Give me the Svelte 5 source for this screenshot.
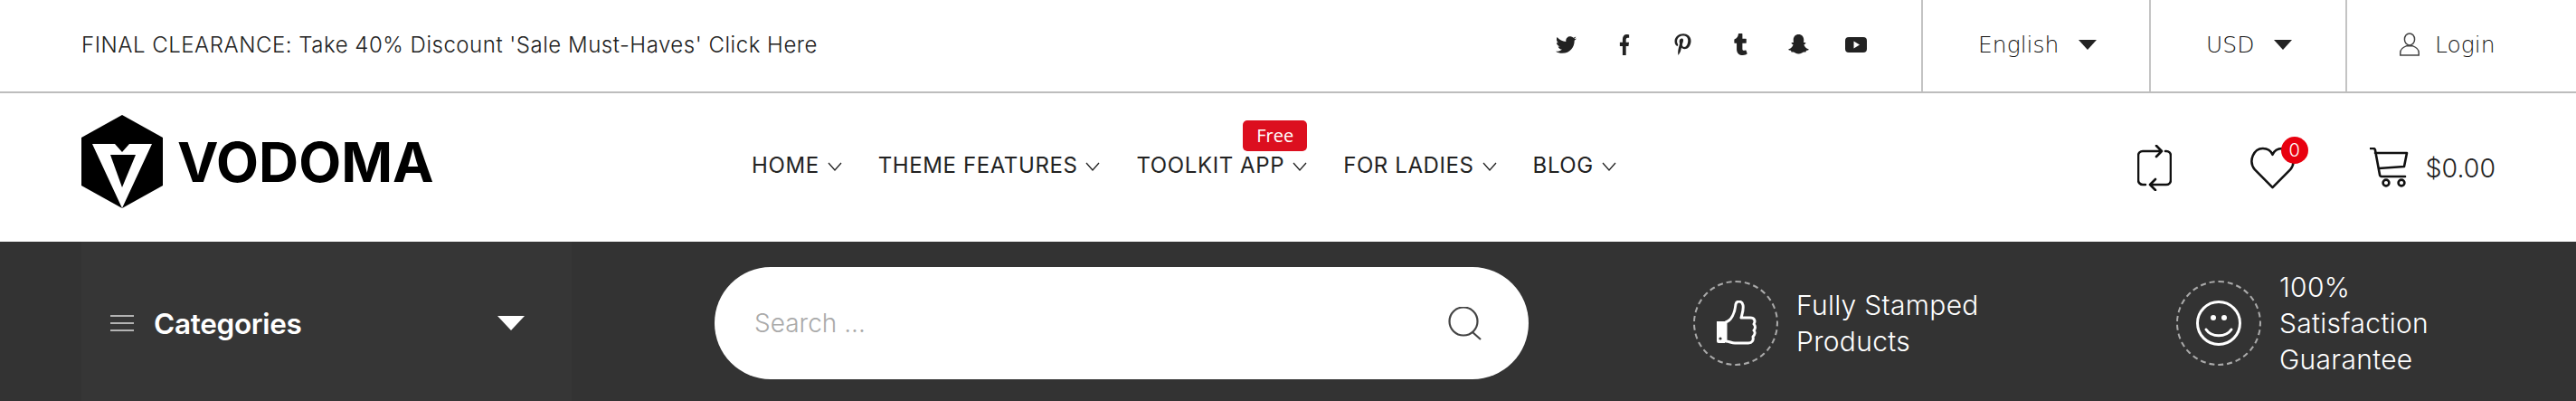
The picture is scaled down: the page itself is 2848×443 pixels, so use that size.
<script>
  const nav = [
    { label: "HOME" },
    { label: "THEME FEATURES" },
    { label: "TOOLKIT APP", badge: "Free" },
    { label: "FOR LADIES" },
    { label: "BLOG" }
  ];
</script>

<div class="page">
  <div class="topbar">
    <div class="notice">FINAL CLEARANCE: Take 40% Discount 'Sale Must-Haves' Click Here</div>
    <div class="socials">
      <svg class="tw" viewBox="0 0 512 512"><path d="M459.37 151.716c.325 4.548.325 9.097.325 13.645 0 138.72-105.583 298.558-298.558 298.558-59.452 0-114.68-17.219-161.137-47.106 8.447.974 16.568 1.299 25.34 1.299 49.055 0 94.213-16.568 130.274-44.832-46.132-.975-84.792-31.188-98.112-72.772 6.498.974 12.995 1.624 19.818 1.624 9.421 0 18.843-1.3 27.614-3.573-48.081-9.747-84.143-51.98-84.143-102.985v-1.299c13.969 7.797 30.214 12.67 47.431 13.319-28.264-18.843-46.781-51.005-46.781-87.391 0-19.492 5.197-37.36 14.294-52.954 51.655 63.675 129.3 105.258 216.365 109.807-1.624-7.797-2.599-15.918-2.599-24.04 0-57.828 46.782-104.934 104.934-104.934 30.213 0 57.502 12.67 76.67 33.137 23.715-4.548 46.456-13.32 66.599-25.34-7.798 24.366-24.366 44.833-46.132 57.827 21.117-2.273 41.584-8.122 60.426-16.243-14.292 20.791-32.161 39.308-52.628 54.253z"/></svg>
      <svg class="fb" viewBox="0 0 320 512" preserveAspectRatio="none"><path d="M279.14 288l14.22-92.66h-88.91v-60.13c0-25.35 12.42-50.06 52.24-50.06h40.42V6.26S260.43 0 225.36 0c-73.22 0-121.08 44.38-121.08 124.72v70.62H22.89V288h81.39v224h100.17V288z"/></svg>
      <svg class="pin" viewBox="0 0 384 512"><path d="M204 6.5C101.4 6.5 0 74.9 0 185.6 0 256 39.6 296 63.6 296c9.9 0 15.6-27.6 15.6-35.4 0-9.3-23.7-29.1-23.7-67.8 0-80.4 61.2-137.4 140.4-137.4 68.1 0 118.5 38.7 118.5 109.8 0 53.1-21.3 152.7-90.3 152.7-24.9 0-46.2-18-46.2-43.8 0-37.8 26.4-74.4 26.4-113.4 0-66.2-93.9-54.2-93.9 25.8 0 16.8 2.1 35.4 9.6 50.7-13.8 59.4-42 147.9-42 209.1 0 18.9 2.7 37.5 4.5 56.4 3.4 3.8 1.7 3.4 6.9 1.5 50.4-69 48.6-82.5 71.4-172.8 12.3 23.4 44.1 36 69.3 36 106.2 0 153.9-103.5 153.9-196.8C384 71.3 298.2 6.5 204 6.5z"/></svg>
      <svg class="tum" viewBox="0 0 320 512" preserveAspectRatio="none"><path d="M309.8 480.3c-13.6 14.5-50 31.7-97.4 31.7-120.8 0-147-88.8-147-140.6v-144H17.9c-5.5 0-10-4.5-10-10v-68c0-7.2 4.5-13.6 11.3-16 62-21.8 81.5-76 84.3-117.1.8-11 6.5-16.3 16.1-16.3h70.9c5.5 0 10 4.5 10 10v115.2h83c5.5 0 10 4.4 10 9.9v81.7c0 5.5-4.5 10-10 10h-83.4V360c0 34.2 23.7 53.6 68 35.8 4.8-1.9 9-3.2 12.7-2.2 3.5.9 5.8 3.4 7.4 7.9l22 64.3c1.8 5 3.3 10.6-.4 14.5z"/></svg>
      <svg class="snap" viewBox="2 2 20 20"><path d="M12 2c-3.2 0-5 2.4-5 5.2 0 1 .1 2 .1 2.6-.6.2-1.5-.2-1.9.3-.4.6.4 1.1 1.6 1.6-.3 1.7-2 3.7-4.2 4.4-.5.2-.4.8.1 1 .7.3 1.6.4 2 .6.2.4.1 1 .5 1.2.6.2 1.5-.1 2.5.3 1 .4 1.9 1.6 4.3 1.6s3.3-1.2 4.3-1.6c1-.4 1.9-.1 2.5-.3.4-.2.3-.8.5-1.2.4-.2 1.3-.3 2-.6.5-.2.6-.8.1-1-2.2-.7-3.9-2.7-4.2-4.4 1.2-.5 2-1 1.6-1.6-.4-.5-1.3-.1-1.9-.3 0-.6.1-1.6.1-2.6C17 4.4 15.2 2 12 2z"/></svg>
      <svg class="yt" viewBox="0 0 24 17"><path fill-rule="evenodd" d="M4 0h16a4 4 0 0 1 4 4v9a4 4 0 0 1-4 4H4a4 4 0 0 1-4-4V4a4 4 0 0 1 4-4zm5.5 4.6v7.8l6.5-3.9z"/></svg>
    </div>
    <div class="cell lang"><span>English</span><i class="caret"></i></div>
    <div class="cell cur"><span>USD</span><i class="caret"></i></div>
    <div class="cell login">
      <svg viewBox="0 0 24 28" fill="none" stroke="#444" stroke-width="1.6"><ellipse cx="12" cy="8" rx="6" ry="7"/><path d="M1 27v-3c0-4 4-7 7-8h8c3 1 7 4 7 8v3z"/></svg>
      <span>Login</span>
    </div>
  </div>

  <div class="midbar">
    <div class="logo">
      <svg viewBox="0 0 90 103"><path d="M45 0 90 25V78L45 103 0 78V25z" fill="#000"/><path d="M12 32H37L45 41 53 32H78L45 103z" fill="#fff"/><path d="M32 44H60L45 80z" fill="#000"/></svg>
      <span>VODOMA</span>
    </div>
    <nav>
      {#each nav as item}
        <div class="navitem">
          {#if item.badge}<span class="free">{item.badge}</span>{/if}
          <span>{item.label}</span>
          <svg viewBox="0 0 16 10" fill="none" stroke="#222" stroke-width="1.3"><path d="M1 1l7 8 7-8"/></svg>
        </div>
      {/each}
    </nav>
    <div class="tools">
      <svg class="compare" viewBox="0 0 38 51" fill="none" stroke="#111" stroke-width="2.6" stroke-linecap="round" stroke-linejoin="round"><path d="M9 44H6a5 5 0 0 1-5-5V12a5 5 0 0 1 5-5h21M21 1l6 6-6 6"/><path d="M31 7h1a5 5 0 0 1 5 5v27a5 5 0 0 1-5 5H14M20 38l-6 6 6 6"/></svg>
      <div class="wish">
        <svg viewBox="0 0 50 48" fill="none" stroke="#111" stroke-width="2.6" stroke-linejoin="round"><path d="M25 46 5 26C-3 16 4 2 14 2c5 0 9 2 11 7 2-5 6-7 11-7 10 0 17 14 9 24z"/></svg>
        <span class="count">0</span>
      </div>
      <div class="cart">
        <svg viewBox="0 0 43 44" fill="none" stroke="#111" stroke-width="2.6" stroke-linecap="round" stroke-linejoin="round"><path d="M1 1h3c1 0 2 1 2 2l5 27c0 1 1 2 2 2h26M6 6h35l-3 15-28 2"/><circle cx="18" cy="39" r="3.4"/><circle cx="35" cy="39" r="3.4"/></svg>
        <span>$0.00</span>
      </div>
    </div>
  </div>

  <div class="bottombar">
    <div class="categories">
      <svg class="burger" viewBox="0 0 26 18" fill="none" stroke="#ddd" stroke-width="1.4"><path d="M0 1h26M0 9h26M0 17h26"/></svg>
      <span>Categories</span>
      <i class="caret-big"></i>
    </div>
    <div class="search">
      <span>Search ...</span>
      <svg viewBox="0 0 38 37" fill="none" stroke="#444" stroke-width="2.2"><circle cx="17" cy="16" r="15.5"/><path d="M27 28l9 8"/></svg>
    </div>
    <div class="feature first">
      <div class="ring">
        <svg class="thumb" viewBox="0 0 45 50"><path d="M11 24C17 22 21 14 22 4c1-4 7-4 8 1 1 5-1 10-2 14h10c5 0 6 4 4 7 2 2 2 5 0 7 2 2 1 5-1 7 1 4-1 7-5 7H21c-4 0-6-2-10-2z" fill="none" stroke="#fff" stroke-width="3" stroke-linejoin="round"/><path d="M1 23h9v24H3a2 2 0 0 1-2-2z" fill="#fff"/><circle cx="5" cy="42" r="1.6" fill="#333"/></svg>
      </div>
      <div class="ftext">Fully Stamped<br />Products</div>
    </div>
    <div class="feature second">
      <div class="ring">
        <svg class="smile" viewBox="0 0 50 50" fill="none" stroke="#fff" stroke-width="3"><circle cx="25" cy="25" r="23.5"/><path d="M11 32c6 9 22 9 28 0" stroke-linecap="round"/><circle cx="19" cy="19" r="3" fill="#fff" stroke="none"/><circle cx="31" cy="19" r="3" fill="#fff" stroke="none"/></svg>
      </div>
      <div class="ftext">100%<br />Satisfaction<br />Guarantee</div>
    </div>
  </div>
</div>

<style>
  :global(body) {
    margin: 0;
    background: #fff;
  }

  .page {
    width: 2848px;
    height: 443px;
    overflow: hidden;
    font-family: Inter, "Liberation Sans", sans-serif;
    color: #222;
  }

  .topbar {
    display: flex;
    align-items: stretch;
    height: 101px;
    border-bottom: 2px solid #bdbdbd;
    padding-left: 90px;
  }

  .notice {
    align-self: center;
    padding-bottom: 3px;
    font-size: 24px;
    font-weight: 300;
    letter-spacing: 0.52px;
    color: #222;
    white-space: nowrap;
  }

  .socials {
    display: flex;
    align-items: center;
    margin-left: auto;
    margin-right: 60px;
    padding-bottom: 3px;
    fill: #222;
  }

  .tw { width: 23px; height: 23px; margin-right: 47px; }
  .fb { width: 12px; height: 23px; margin-right: 49px; }
  .pin { width: 19px; height: 24px; margin-right: 47px; }
  .tum { width: 15px; height: 24px; margin-right: 45px; }
  .snap { width: 23px; height: 23px; margin-right: 40px; }
  .yt { width: 24px; height: 17px; }

  .cell {
    display: flex;
    align-items: center;
    border-left: 2px solid #c4c4c4;
    padding-bottom: 3px;
    font-family: "DejaVu Sans", sans-serif;
    font-size: 25px;
    font-weight: 200;
    color: #111;
    box-sizing: border-box;
  }

  .lang { width: 252px; padding-left: 61px; }
  .cur { width: 217px; padding-left: 61px; }
  .login { width: 255px; padding-left: 57px; gap: 16px; }
  .login svg { width: 24px; height: 26px; }

  .caret {
    width: 0;
    height: 0;
    margin-left: 22px;
    border-left: 10px solid transparent;
    border-right: 10px solid transparent;
    border-top: 11px solid #222;
  }

  .midbar {
    display: flex;
    align-items: center;
    height: 164px;
    padding: 0 89px 0 90px;
  }

  .logo {
    display: flex;
    align-items: center;
    width: 741px;
    flex: none;
    gap: 16px;
    padding-bottom: 13px;
  }

  .logo svg {
    width: 90px;
    height: 103px;
  }

  .logo span {
    font-size: 61px;
    font-weight: 700;
    color: #000;
  }

  nav {
    display: flex;
    gap: 40px;
    padding-bottom: 5px;
  }

  .navitem {
    position: relative;
    display: flex;
    align-items: center;
    gap: 9px;
    font-size: 24px;
    font-weight: 400;
    letter-spacing: 0.6px;
    white-space: nowrap;
  }

  .navitem svg {
    width: 16px;
    height: 10px;
    margin-top: 3px;
  }

  .free {
    position: absolute;
    right: 0;
    top: -35px;
    width: 71px;
    height: 34px;
    background: #dc0f1f;
    border-radius: 5px;
    color: #fff;
    font-family: "Open Sans", sans-serif;
    font-size: 20px;
    letter-spacing: 0;
    line-height: 34px;
    text-align: center;
  }

  .tools {
    display: flex;
    align-items: center;
    margin-left: auto;
  }

  .compare {
    width: 38px;
    height: 51px;
    margin-right: 87px;
  }

  .wish {
    position: relative;
    width: 49px;
    height: 47px;
    margin-right: 83px;
  }

  .wish svg {
    width: 49px;
    height: 47px;
    display: block;
  }

  .count {
    position: absolute;
    left: 34px;
    top: -11px;
    width: 30px;
    height: 30px;
    border-radius: 50%;
    background: #e8000f;
    color: #fff;
    font-size: 20px;
    font-weight: 300;
    line-height: 30px;
    text-align: center;
  }

  .cart {
    display: flex;
    align-items: center;
    gap: 19px;
    font-size: 28.5px;
    font-weight: 300;
  }

  .cart svg {
    width: 43px;
    height: 44px;
  }

  .bottombar {
    display: flex;
    align-items: center;
    height: 176px;
    background: #333;
    color: #fff;
  }

  .categories {
    display: flex;
    align-items: center;
    width: 542px;
    height: 100%;
    flex: none;
    margin-left: 90px;
    padding: 4px 0 0 32px;
    box-sizing: border-box;
    background: #363636;
    font-size: 31.5px;
    font-weight: 600;
  }

  .burger {
    width: 26px;
    height: 18px;
    margin-right: 22px;
  }

  .categories span {
    width: 380px;
    letter-spacing: -0.3px;
  }

  .caret-big {
    width: 0;
    height: 0;
    border-left: 15px solid transparent;
    border-right: 15px solid transparent;
    border-top: 16px solid #fff;
  }

  .search {
    display: flex;
    align-items: center;
    justify-content: space-between;
    margin: 4px 0 0 158px;
    width: 900px;
    height: 124px;
    flex: none;
    box-sizing: border-box;
    padding: 0 51px 0 44px;
    background: #fff;
    border-radius: 62px;
    color: #aaa;
    font-size: 28px;
    font-weight: 300;
  }

  .search svg {
    width: 38px;
    height: 37px;
  }

  .feature {
    display: flex;
    align-items: center;
    gap: 20px;
    flex: none;
    margin-top: 4px;
  }

  .first { margin-left: 182px; width: 534px; }

  .ring {
    display: flex;
    align-items: center;
    justify-content: center;
    width: 94px;
    height: 94px;
    flex: none;
    border: 2px dashed #aaa;
    border-radius: 50%;
    box-sizing: border-box;
  }

  .thumb { width: 45px; height: 50px; }
  .smile { width: 50px; height: 50px; }

  .ftext {
    font-size: 30px;
    font-weight: 300;
    letter-spacing: 0.3px;
    line-height: 40px;
  }
</style>
